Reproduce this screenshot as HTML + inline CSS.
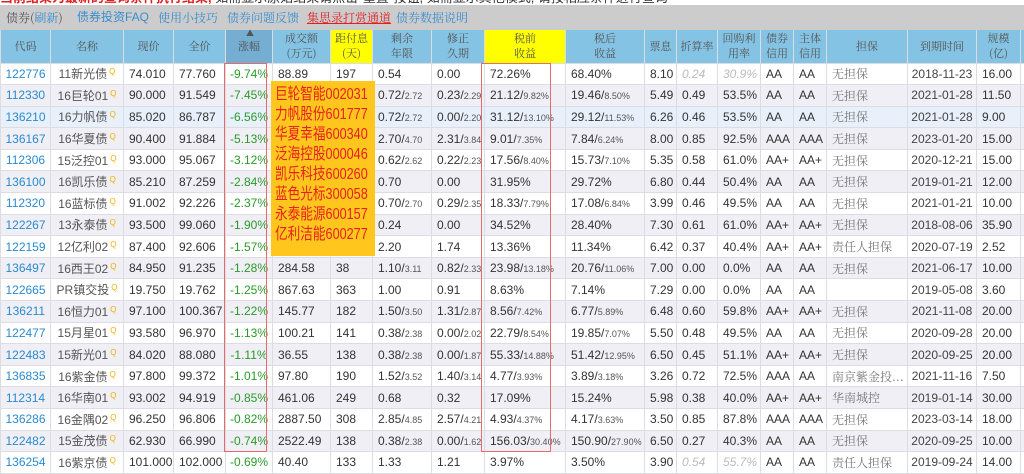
<!DOCTYPE html>
<html><head><meta charset="utf-8"><style>
*{margin:0;padding:0;box-sizing:border-box}
body{width:1024px;height:461px;overflow:hidden;background:#fff;font-family:"Liberation Sans","Noto Sans CJK SC",sans-serif;position:relative}
.top{position:absolute;top:-13px;left:0;font-size:13px;color:#e02020;white-space:nowrap;font-weight:bold}
.top span{color:#333;font-weight:normal}
.bar{position:absolute;top:5px;left:0;width:1024px;height:25px;background:#cccccc;font-family:"Noto Serif CJK SC",serif;font-size:12px;line-height:25px;white-space:nowrap}
.bar b{position:absolute;top:0;font-weight:normal;color:#3a8ed0}
table{position:absolute;top:30px;left:0;border-collapse:collapse;table-layout:fixed;width:1030px}
th{height:33px;background:#84c3e3;color:#555;font-weight:normal;font-family:"Noto Serif CJK SC",serif;font-size:11px;line-height:15px;border:1px solid #dcdde2;border-top:none}
th.y{background:#ffff00}
th.s{background:#76aed2;position:relative}
td{height:21.6px;font-size:12px;color:#333;border:1px solid #dcdde2;padding:0 0 0 5px;white-space:nowrap;overflow:hidden}
tr:nth-child(odd) td{background:#efeff5}
tr.h td{background:#e8f0fb}
td.c{color:#2a8ad0;text-align:center;padding:0}
td.n{color:#555;text-align:center;padding:0}
td.g{color:#2a9a2a;text-align:center;padding:0}
td.d{text-align:center;padding:0;color:#444}
td.z{font-family:"Noto Serif CJK SC",serif;color:#777}
td.m{color:#bbb;font-style:italic}
i{font-style:normal;font-size:9px;color:#555}
sup{font-size:8px;color:#f0b000;vertical-align:4px;margin-left:2px}
.or{position:absolute;left:271px;top:81px;width:104px;height:175px;background:#ffc61e;color:#e8201a;padding:4px 0 0 4px;white-space:nowrap}
.or div{font-size:16px;line-height:20px;transform:scaleX(0.79);transform-origin:0 0}
.rb{position:absolute;border:1.5px solid #e86a6a}
</style></head><body>
<div class="top">当前结果为最新的查询条件执行结果, <span>如需显示原始结果请点击"重置"按钮, 如需显示其他模式, 请按相应条件进行查询</span></div>
<div class="bar"><b style="left:6px;color:#555">债券(<span style="color:#3a8ed0">刷新</span>)</b><b style="left:77px;font-family:'Liberation Sans','Noto Sans CJK SC',sans-serif">债券投资FAQ</b><b style="left:158px">使用小技巧</b><b style="left:227px">债券问题反馈</b><b style="left:307px;color:#e02020;text-decoration:underline">集思录打赏通道</b><b style="left:396px">债券数据说明</b></div>
<table>
<colgroup><col style="width:50px"><col style="width:73px"><col style="width:50px"><col style="width:52px"><col style="width:47px"><col style="width:58px"><col style="width:42px"><col style="width:59px"><col style="width:53px"><col style="width:81px"><col style="width:79px"><col style="width:32px"><col style="width:41px"><col style="width:43px"><col style="width:33px"><col style="width:33px"><col style="width:81px"><col style="width:69px"><col style="width:44px"><col style="width:10px"></colgroup>
<tr><th>代码</th><th>名称</th><th>现价</th><th>全价</th><th class="s"><span style="position:absolute;top:-4px;left:20px;font-size:8px">▲</span>涨幅</th><th>成交额<br>(万元)</th><th class="y">距付息<br>(天)</th><th>剩余<br>年限</th><th>修正<br>久期</th><th class="y">税前<br>收益</th><th>税后<br>收益</th><th>票息</th><th>折算率</th><th>回购利<br>用率</th><th>债券<br>信用</th><th>主体<br>信用</th><th>担保</th><th>到期时间</th><th>规模<br>(亿)</th><th></th></tr>
<tr><td class="c">122776</td><td class="n">11新光债<sup>Q</sup></td><td>74.010</td><td>77.760</td><td class="g">-9.74%</td><td>88.89</td><td>197</td><td>0.54</td><td>0.00</td><td>72.26%</td><td>68.40%</td><td>8.10</td><td class="m">0.24</td><td class="m">30.9%</td><td>AA</td><td>AA</td><td class="z">无担保</td><td class="d">2018-11-23</td><td>16.00</td><td></td></tr>
<tr><td class="c">112330</td><td class="n">16巨轮01<sup>Q</sup></td><td>90.000</td><td>91.549</td><td class="g">-7.45%</td><td></td><td></td><td>0.72/<i>2.72</i></td><td>0.23/<i>2.29</i></td><td>21.12/<i>9.82%</i></td><td>19.46/<i>8.50%</i></td><td>5.49</td><td>0.49</td><td>53.5%</td><td>AA</td><td>AA</td><td class="z">无担保</td><td class="d">2021-01-28</td><td>11.50</td><td></td></tr>
<tr class="h"><td class="c">136210</td><td class="n">16力帆债<sup>Q</sup></td><td>85.020</td><td>86.787</td><td class="g">-6.56%</td><td></td><td></td><td>0.72/<i>2.72</i></td><td>0.00/<i>2.20</i></td><td>31.12/<i>13.10%</i></td><td>29.12/<i>11.53%</i></td><td>6.26</td><td>0.46</td><td>53.5%</td><td>AA</td><td>AA</td><td class="z">无担保</td><td class="d">2021-01-28</td><td>9.00</td><td></td></tr>
<tr><td class="c">136167</td><td class="n">16华夏债<sup>Q</sup></td><td>90.400</td><td>91.884</td><td class="g">-5.13%</td><td></td><td></td><td>2.70/<i>4.70</i></td><td>2.31/<i>3.84</i></td><td>9.01/<i>7.35%</i></td><td>7.84/<i>6.24%</i></td><td>8.00</td><td>0.85</td><td>92.5%</td><td>AAA</td><td>AAA</td><td class="z">无担保</td><td class="d">2023-01-20</td><td>15.00</td><td></td></tr>
<tr><td class="c">112306</td><td class="n">15泛控01<sup>Q</sup></td><td>93.000</td><td>95.067</td><td class="g">-3.12%</td><td></td><td></td><td>0.62/<i>2.62</i></td><td>0.22/<i>2.23</i></td><td>17.56/<i>8.40%</i></td><td>15.73/<i>7.10%</i></td><td>5.35</td><td>0.58</td><td>61.0%</td><td>AA+</td><td>AA+</td><td class="z">无担保</td><td class="d">2020-12-21</td><td>15.00</td><td></td></tr>
<tr><td class="c">136100</td><td class="n">16凯乐债<sup>Q</sup></td><td>85.210</td><td>87.259</td><td class="g">-2.84%</td><td></td><td></td><td>0.70</td><td>0.00</td><td>31.95%</td><td>29.72%</td><td>6.80</td><td>0.44</td><td>50.4%</td><td>AA</td><td>AA</td><td class="z">无担保</td><td class="d">2019-01-21</td><td>12.00</td><td></td></tr>
<tr><td class="c">112320</td><td class="n">16蓝标债<sup>Q</sup></td><td>91.002</td><td>92.226</td><td class="g">-2.37%</td><td></td><td></td><td>0.70/<i>2.70</i></td><td>0.29/<i>2.35</i></td><td>18.33/<i>7.79%</i></td><td>17.08/<i>6.84%</i></td><td>3.99</td><td>0.46</td><td>49.5%</td><td>AA</td><td>AA</td><td class="z">无担保</td><td class="d">2021-01-21</td><td>10.00</td><td></td></tr>
<tr><td class="c">122267</td><td class="n">13永泰债<sup>Q</sup></td><td>93.500</td><td>99.060</td><td class="g">-1.90%</td><td></td><td></td><td>0.24</td><td>0.00</td><td>34.52%</td><td>28.40%</td><td>7.30</td><td>0.61</td><td>61.0%</td><td>AA+</td><td>AA+</td><td class="z">无担保</td><td class="d">2018-08-06</td><td>35.90</td><td></td></tr>
<tr><td class="c">122159</td><td class="n">12亿利02<sup>Q</sup></td><td>87.400</td><td>92.606</td><td class="g">-1.57%</td><td></td><td></td><td>2.20</td><td>1.74</td><td>13.36%</td><td>11.34%</td><td>6.42</td><td>0.37</td><td>40.4%</td><td>AA+</td><td>AA+</td><td class="z">责任人担保</td><td class="d">2020-07-19</td><td>2.52</td><td></td></tr>
<tr><td class="c">136497</td><td class="n">16西王02<sup>Q</sup></td><td>84.950</td><td>91.235</td><td class="g">-1.28%</td><td>284.58</td><td>38</td><td>1.10/<i>3.11</i></td><td>0.82/<i>2.33</i></td><td>23.98/<i>13.18%</i></td><td>20.76/<i>11.06%</i></td><td>7.00</td><td>0.00</td><td>0.0%</td><td>AA</td><td>AA</td><td class="z">无担保</td><td class="d">2021-06-17</td><td>10.00</td><td></td></tr>
<tr><td class="c">122665</td><td class="n">PR镇交投<sup>Q</sup></td><td>19.750</td><td>19.762</td><td class="g">-1.25%</td><td>867.63</td><td>363</td><td>1.00</td><td>0.91</td><td>8.63%</td><td>7.14%</td><td>7.29</td><td>0.00</td><td>0.0%</td><td>AA</td><td>AA</td><td class="z"></td><td class="d">2019-05-08</td><td>3.60</td><td></td></tr>
<tr><td class="c">136211</td><td class="n">16恒力01<sup>Q</sup></td><td>97.100</td><td>100.367</td><td class="g">-1.22%</td><td>145.77</td><td>182</td><td>1.50/<i>3.50</i></td><td>1.31/<i>2.87</i></td><td>8.56/<i>7.42%</i></td><td>6.77/<i>5.89%</i></td><td>6.48</td><td>0.60</td><td>59.8%</td><td>AA+</td><td>AA+</td><td class="z">无担保</td><td class="d">2021-11-08</td><td>20.00</td><td></td></tr>
<tr><td class="c">122477</td><td class="n">15月星01<sup>Q</sup></td><td>93.580</td><td>96.970</td><td class="g">-1.13%</td><td>100.21</td><td>141</td><td>0.38/<i>2.38</i></td><td>0.00/<i>2.02</i></td><td>22.79/<i>8.54%</i></td><td>19.85/<i>7.07%</i></td><td>5.50</td><td>0.48</td><td>49.5%</td><td>AA</td><td>AA</td><td class="z">无担保</td><td class="d">2020-09-28</td><td>20.00</td><td></td></tr>
<tr><td class="c">122483</td><td class="n">15新光01<sup>Q</sup></td><td>84.020</td><td>88.080</td><td class="g">-1.11%</td><td>36.55</td><td>138</td><td>0.38/<i>2.38</i></td><td>0.00/<i>1.87</i></td><td>55.33/<i>14.88%</i></td><td>51.42/<i>12.95%</i></td><td>6.50</td><td>0.45</td><td>51.1%</td><td>AA+</td><td>AA+</td><td class="z">无担保</td><td class="d">2020-09-25</td><td>20.00</td><td></td></tr>
<tr><td class="c">136835</td><td class="n">16紫金债<sup>Q</sup></td><td>97.800</td><td>99.372</td><td class="g">-1.01%</td><td>97.80</td><td>190</td><td>1.52/<i>3.52</i></td><td>1.40/<i>3.14</i></td><td>4.77/<i>3.93%</i></td><td>3.89/<i>3.18%</i></td><td>3.26</td><td>0.72</td><td>72.5%</td><td>AAA</td><td>AA</td><td class="z">南京紫金投...</td><td class="d">2021-11-16</td><td>7.50</td><td></td></tr>
<tr><td class="c">112314</td><td class="n">16华南01<sup>Q</sup></td><td>93.002</td><td>94.919</td><td class="g">-0.85%</td><td>461.06</td><td>249</td><td>0.68</td><td>0.32</td><td>17.09%</td><td>15.24%</td><td>5.98</td><td>0.38</td><td>40.0%</td><td>AA+</td><td>AA+</td><td class="z">华南城控</td><td class="d">2019-01-14</td><td>30.00</td><td></td></tr>
<tr><td class="c">136286</td><td class="n">16金隅02<sup>Q</sup></td><td>96.250</td><td>96.806</td><td class="g">-0.82%</td><td>2887.50</td><td>308</td><td>2.85/<i>4.85</i></td><td>2.57/<i>4.21</i></td><td>4.93/<i>4.37%</i></td><td>4.17/<i>3.63%</i></td><td>3.50</td><td>0.85</td><td>87.8%</td><td>AAA</td><td>AAA</td><td class="z">无担保</td><td class="d">2023-03-14</td><td>18.00</td><td></td></tr>
<tr><td class="c">122482</td><td class="n">15金茂债<sup>Q</sup></td><td>62.930</td><td>66.990</td><td class="g">-0.74%</td><td>2522.49</td><td>138</td><td>0.38/<i>2.38</i></td><td>0.00/<i>1.62</i></td><td>156.03/<i>30.40%</i></td><td>150.90/<i>27.90%</i></td><td>6.50</td><td>0.27</td><td>40.3%</td><td>AA</td><td>AA</td><td class="z">无担保</td><td class="d">2020-09-25</td><td>10.00</td><td></td></tr>
<tr><td class="c">136254</td><td class="n">16紫京债<sup>Q</sup></td><td>101.000</td><td>102.000</td><td class="g">-0.69%</td><td>40.40</td><td>133</td><td>1.33</td><td>1.21</td><td>3.97%</td><td>3.50%</td><td>3.90</td><td class="m">0.54</td><td class="m">55.7%</td><td>AA</td><td>AA</td><td class="z">责任人担保</td><td class="d">2019-09-24</td><td>14.00</td><td></td></tr>
</table>
<div class="rb" style="left:224px;top:63px;width:43px;height:389px"></div>
<div class="rb" style="left:481px;top:63px;width:70px;height:389px"></div>
<div class="or"><div>巨轮智能002031<br>力帆股份601777<br>华夏幸福600340<br>泛海控股000046<br>凯乐科技600260<br>蓝色光标300058<br>永泰能源600157<br>亿利洁能600277</div></div>
</body></html>
